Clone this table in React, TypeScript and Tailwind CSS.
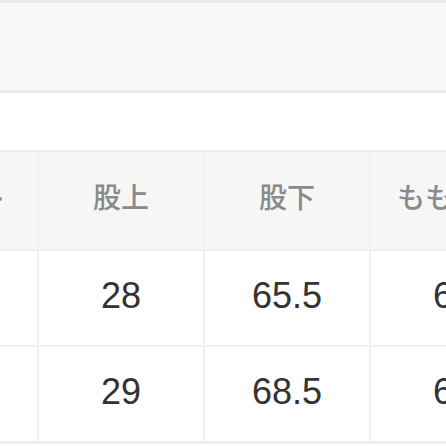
const columns = [
  { label: "ウエスト", values: ["", ""] },
  { label: "股上", values: ["28", "29"] },
  { label: "股下", values: ["65.5", "68.5"] },
  { label: "もも周り", values: ["62", "64"] },
];

const font = {
  fontFamily: '"Liberation Sans", "Noto Sans CJK JP", sans-serif',
};

export default function App() {
  return (
    <div className="h-[446px] w-[446px] overflow-hidden bg-white" style={font}>
      <div className="h-[3px] bg-[#ebebeb]" />
      <div className="h-[86px] bg-[#f7f7f7]" />
      <div className="h-[1px] bg-[#fbfbfb]" />
      <div className="h-[3px] bg-[#ececec]" />
      <div className="h-[57px] bg-white" />

      <div className="ml-[-127px] flex border-t-2 border-b-[3px] border-[#eeeeee]">
        {columns.map((col, c) => (
          <div
            key={col.label}
            className="flex w-[166px] shrink-0 flex-col border-r-2 border-[#f0f0f0]"
          >
            <div
              className={`flex h-[97px] items-center justify-center bg-[#f6f6f6] pb-[4px] text-[28px] font-medium text-[#8a8a8a] ${
                c === 0 ? "pr-[10px]" : ""
              }`}
            >
              {col.label}
            </div>
            {col.values.map((v, i) => (
              <div
                key={i}
                className="flex h-[96px] items-center justify-center border-t-2 border-[#f0f0f0] pb-[4px] text-[36px] text-[#333333]"
              >
                {v}
              </div>
            ))}
          </div>
        ))}
      </div>
    </div>
  );
}
